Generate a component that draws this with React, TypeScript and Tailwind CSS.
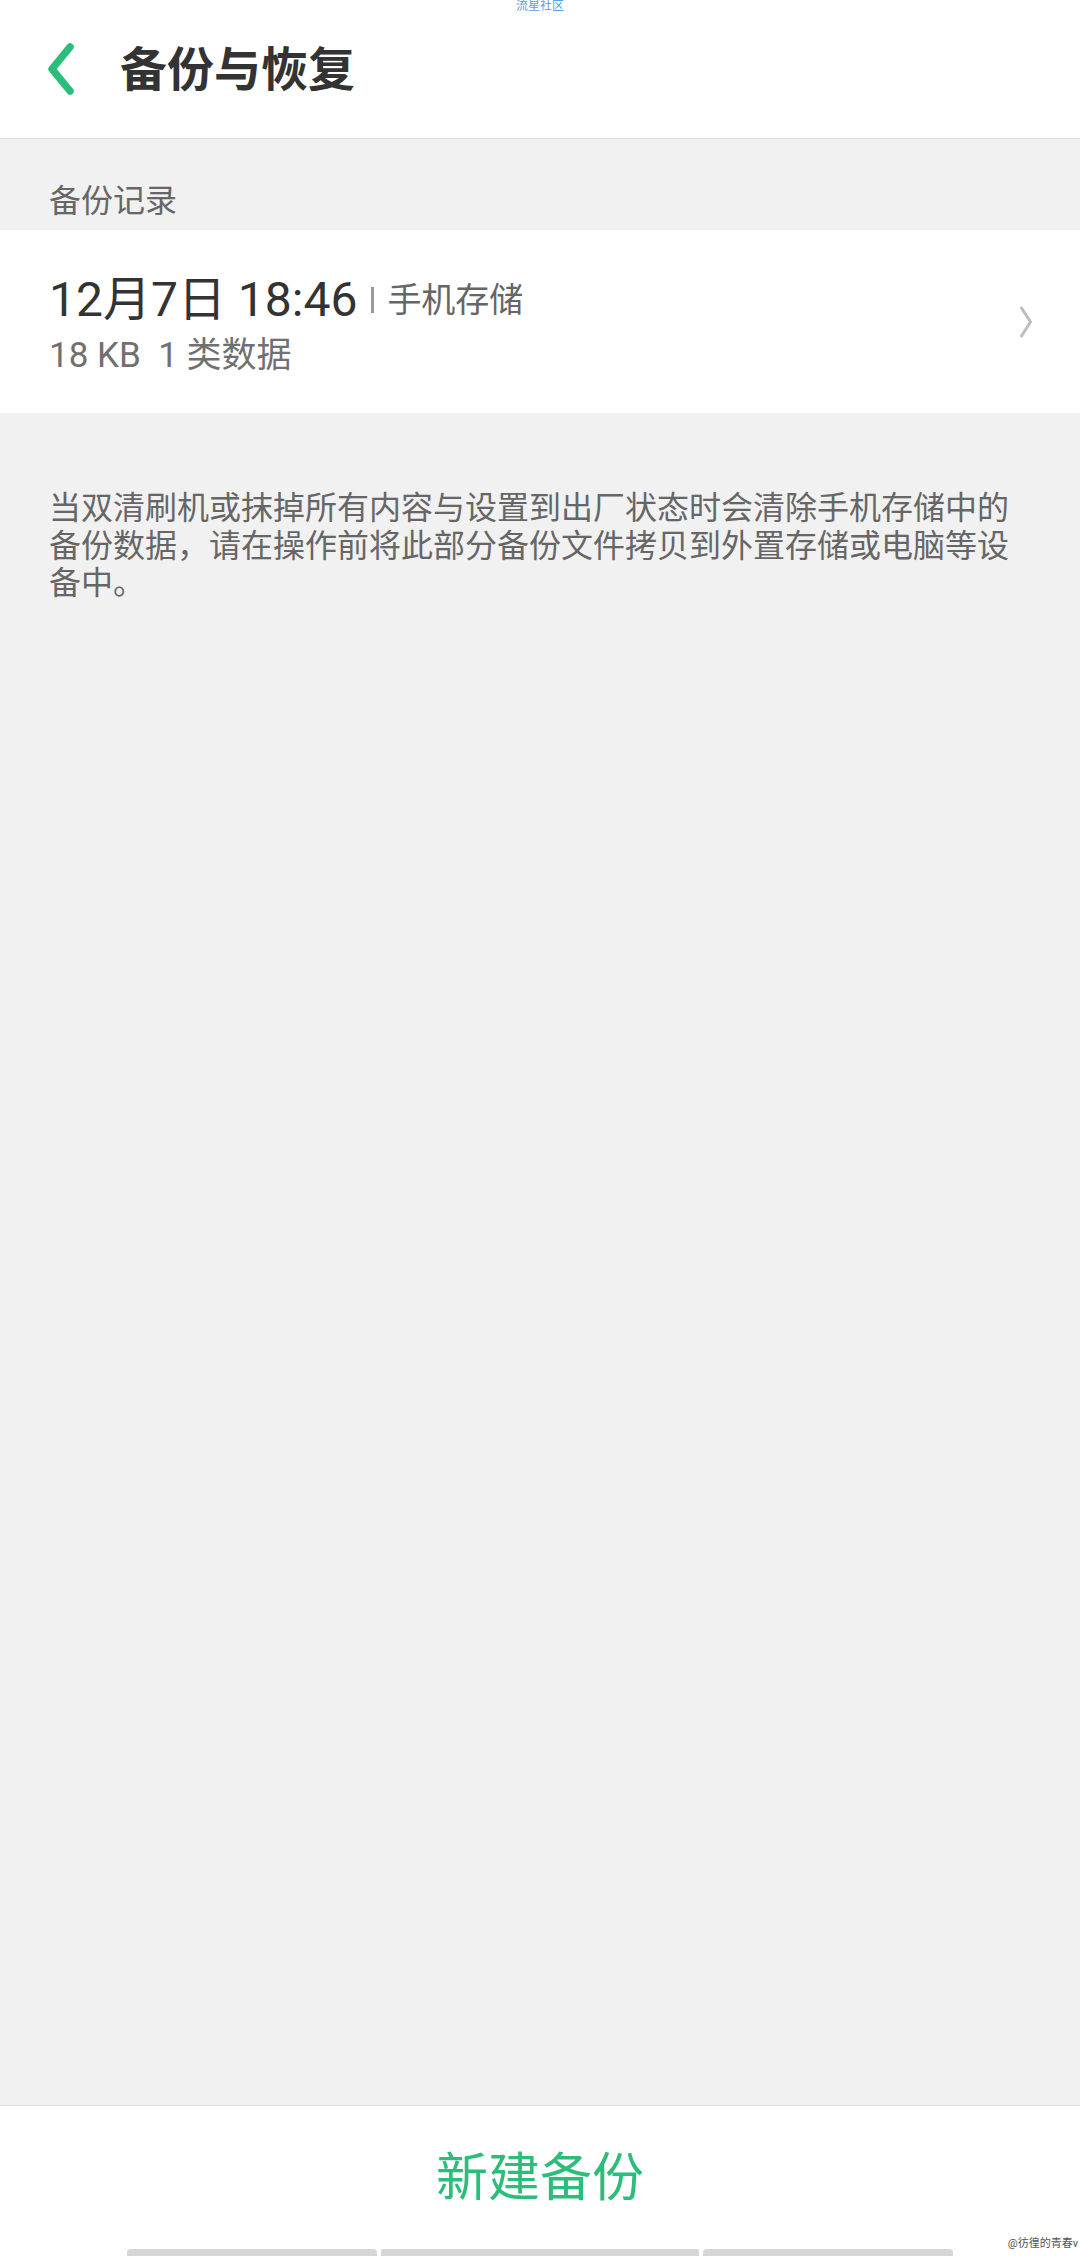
const cjk = 'font-[Roboto,"Noto_Sans_CJK_SC",sans-serif]'

function BackIcon() {
  return (
    <svg width="28" height="52" viewBox="0 0 28 52" fill="none">
      <path
        d="M23 4 L5 26 L23 48"
        stroke="#2dbd7b"
        strokeWidth="7.5"
        strokeLinecap="round"
        strokeLinejoin="round"
      />
    </svg>
  )
}

function ChevronRight() {
  return (
    <svg width="14" height="32" viewBox="0 0 14 32" fill="none">
      <path
        d="M2.5 2 L11.5 16 L2.5 30"
        stroke="#bdbdbd"
        strokeWidth="3"
        strokeLinecap="round"
        strokeLinejoin="round"
      />
    </svg>
  )
}

export default function App() {
  return (
    <div className={`relative w-[1080px] h-[2256px] flex flex-col bg-[#f1f1f1] ${cjk}`}>
      {/* tiny watermark on top */}
      <div className="absolute top-0 left-0 w-full flex justify-center">
        <span className="text-[12px] leading-[13px] text-[#5a9ae6]">流星社区</span>
      </div>

      {/* Header */}
      <header className="h-[139px] shrink-0 bg-white border-b border-[#dcdcdc] flex items-center pl-[47px]">
        <BackIcon />
        <h1 className="ml-[45px] text-[47px] leading-none font-bold text-[#333]">备份与恢复</h1>
      </header>

      {/* Body */}
      <main className="flex-1 flex flex-col">
        <div className="h-[91px] flex items-end pl-[49px] pb-[13px]">
          <span className="text-[32px] leading-none text-[#666]">备份记录</span>
        </div>

        <div className="h-[183px] bg-white flex items-center justify-between pl-[49px] pr-[47px]">
          <div className="flex flex-col pt-[6px]">
            <div className="flex items-center h-[56px]">
              <span className="text-[48px] leading-none text-[#333]">12月7日 18:46</span>
              <span className="ml-[14px] mr-[13px] w-[3px] h-[26px] bg-[#999]" />
              <span className="text-[34px] leading-none text-[#666]">手机存储</span>
            </div>
            <div className="mt-[5px] h-[44px] flex items-center text-[35px] leading-none text-[#707070] whitespace-pre">
              18 KB  1 类数据
            </div>
          </div>
          <ChevronRight />
        </div>

        <p className="mt-[77px] px-[49px] text-[32px] leading-[37.5px] text-[#666]">
          当双清刷机或抹掉所有内容与设置到出厂状态时会清除手机存储中的备份数据，请在操作前将此部分备份文件拷贝到外置存储或电脑等设备中。
        </p>
      </main>

      {/* Bottom action */}
      <footer className="h-[151px] shrink-0 bg-white border-t border-[#dcdcdc] flex flex-col">
        <div className="flex-1 flex items-center justify-center pt-[2px]">
          <span className="text-[52px] leading-none text-[#2dbd7b]">新建备份</span>
        </div>
        <div className="h-[7px] flex gap-[4px] pl-[127px]">
          <div className="w-[250px] h-full bg-[#d6d6d6] rounded-t-[4px]" />
          <div className="w-[318px] h-full bg-[#d6d6d6] rounded-t-[2px]" />
          <div className="w-[250px] h-full bg-[#d6d6d6] rounded-t-[4px]" />
        </div>
      </footer>

      <span className="absolute right-[2px] bottom-[7px] text-[11px] leading-none text-[#555]">
        @彷徨的青春v
      </span>
    </div>
  )
}
